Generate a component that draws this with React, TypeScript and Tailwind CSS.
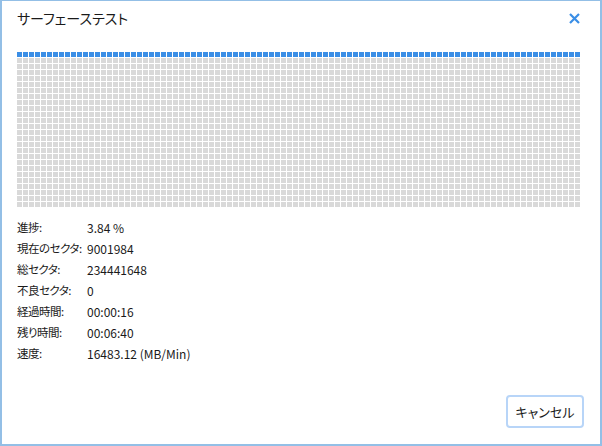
import React from 'react'

const COLS = 94
const ROWS = 26

const STATS: [string, string][] = [
  ['進捗:', '3.84 %'],
  ['現在のセクタ:', '9001984'],
  ['総セクタ:', '234441648'],
  ['不良セクタ:', '0'],
  ['経過時間:', '00:00:16'],
  ['残り時間:', '00:06:40'],
  ['速度:', '16483.12 (MB/Min)'],
]

export default function App() {
  const total = COLS * ROWS
  const done = Math.round(total * 0.0384)

  return (
    <div className="w-[602px] h-[446px] bg-white border-x-2 border-b-2 border-t border-[#93bfe6] flex flex-col text-[#1a1a1a] font-['Noto_Sans_CJK_JP','Noto_Sans',sans-serif] [font-feature-settings:'palt']">
      {/* タイトル */}
      <div className="flex items-center justify-between h-[35px] pl-[15px] pr-[20px]">
        <span className="text-[14px]">サーフェーステスト</span>
        <svg width="11" height="11" viewBox="0 0 11 11" className="text-[#3a8ee6]">
          <path d="M1 1 L10 10 M10 1 L1 10" stroke="currentColor" strokeWidth="2.2" />
        </svg>
      </div>

      {/* セクタマップ */}
      <div className="pl-[15px] pt-[16px]">
        <div className="grid grid-cols-[repeat(94,5px)] gap-px">
          {Array.from({ length: total }).map((_, i) => (
            <div
              key={i}
              className={`h-[5px] ${i < done ? 'bg-[#3a8ee6]' : 'bg-[#d9d9d9]'}`}
            />
          ))}
        </div>
      </div>

      {/* 詳細 */}
      <div className="pl-[15px] pt-[10px] flex flex-col text-[12px]">
        {STATS.map(([label, value]) => (
          <div key={label} className="flex items-center h-[21px] whitespace-nowrap">
            <span className="w-[70px] shrink-0 text-[11.5px] tracking-[-0.5px]">{label}</span>
            <span>{value}</span>
          </div>
        ))}
      </div>

      <div className="flex-1" />

      {/* ボタン */}
      <div className="flex justify-end pr-[16px] pb-[16px]">
        <button className="w-[78px] h-[33px] border-2 border-[#b8d5f8] rounded-[4px] text-[13px] bg-white">
          キャンセル
        </button>
      </div>
    </div>
  )
}
